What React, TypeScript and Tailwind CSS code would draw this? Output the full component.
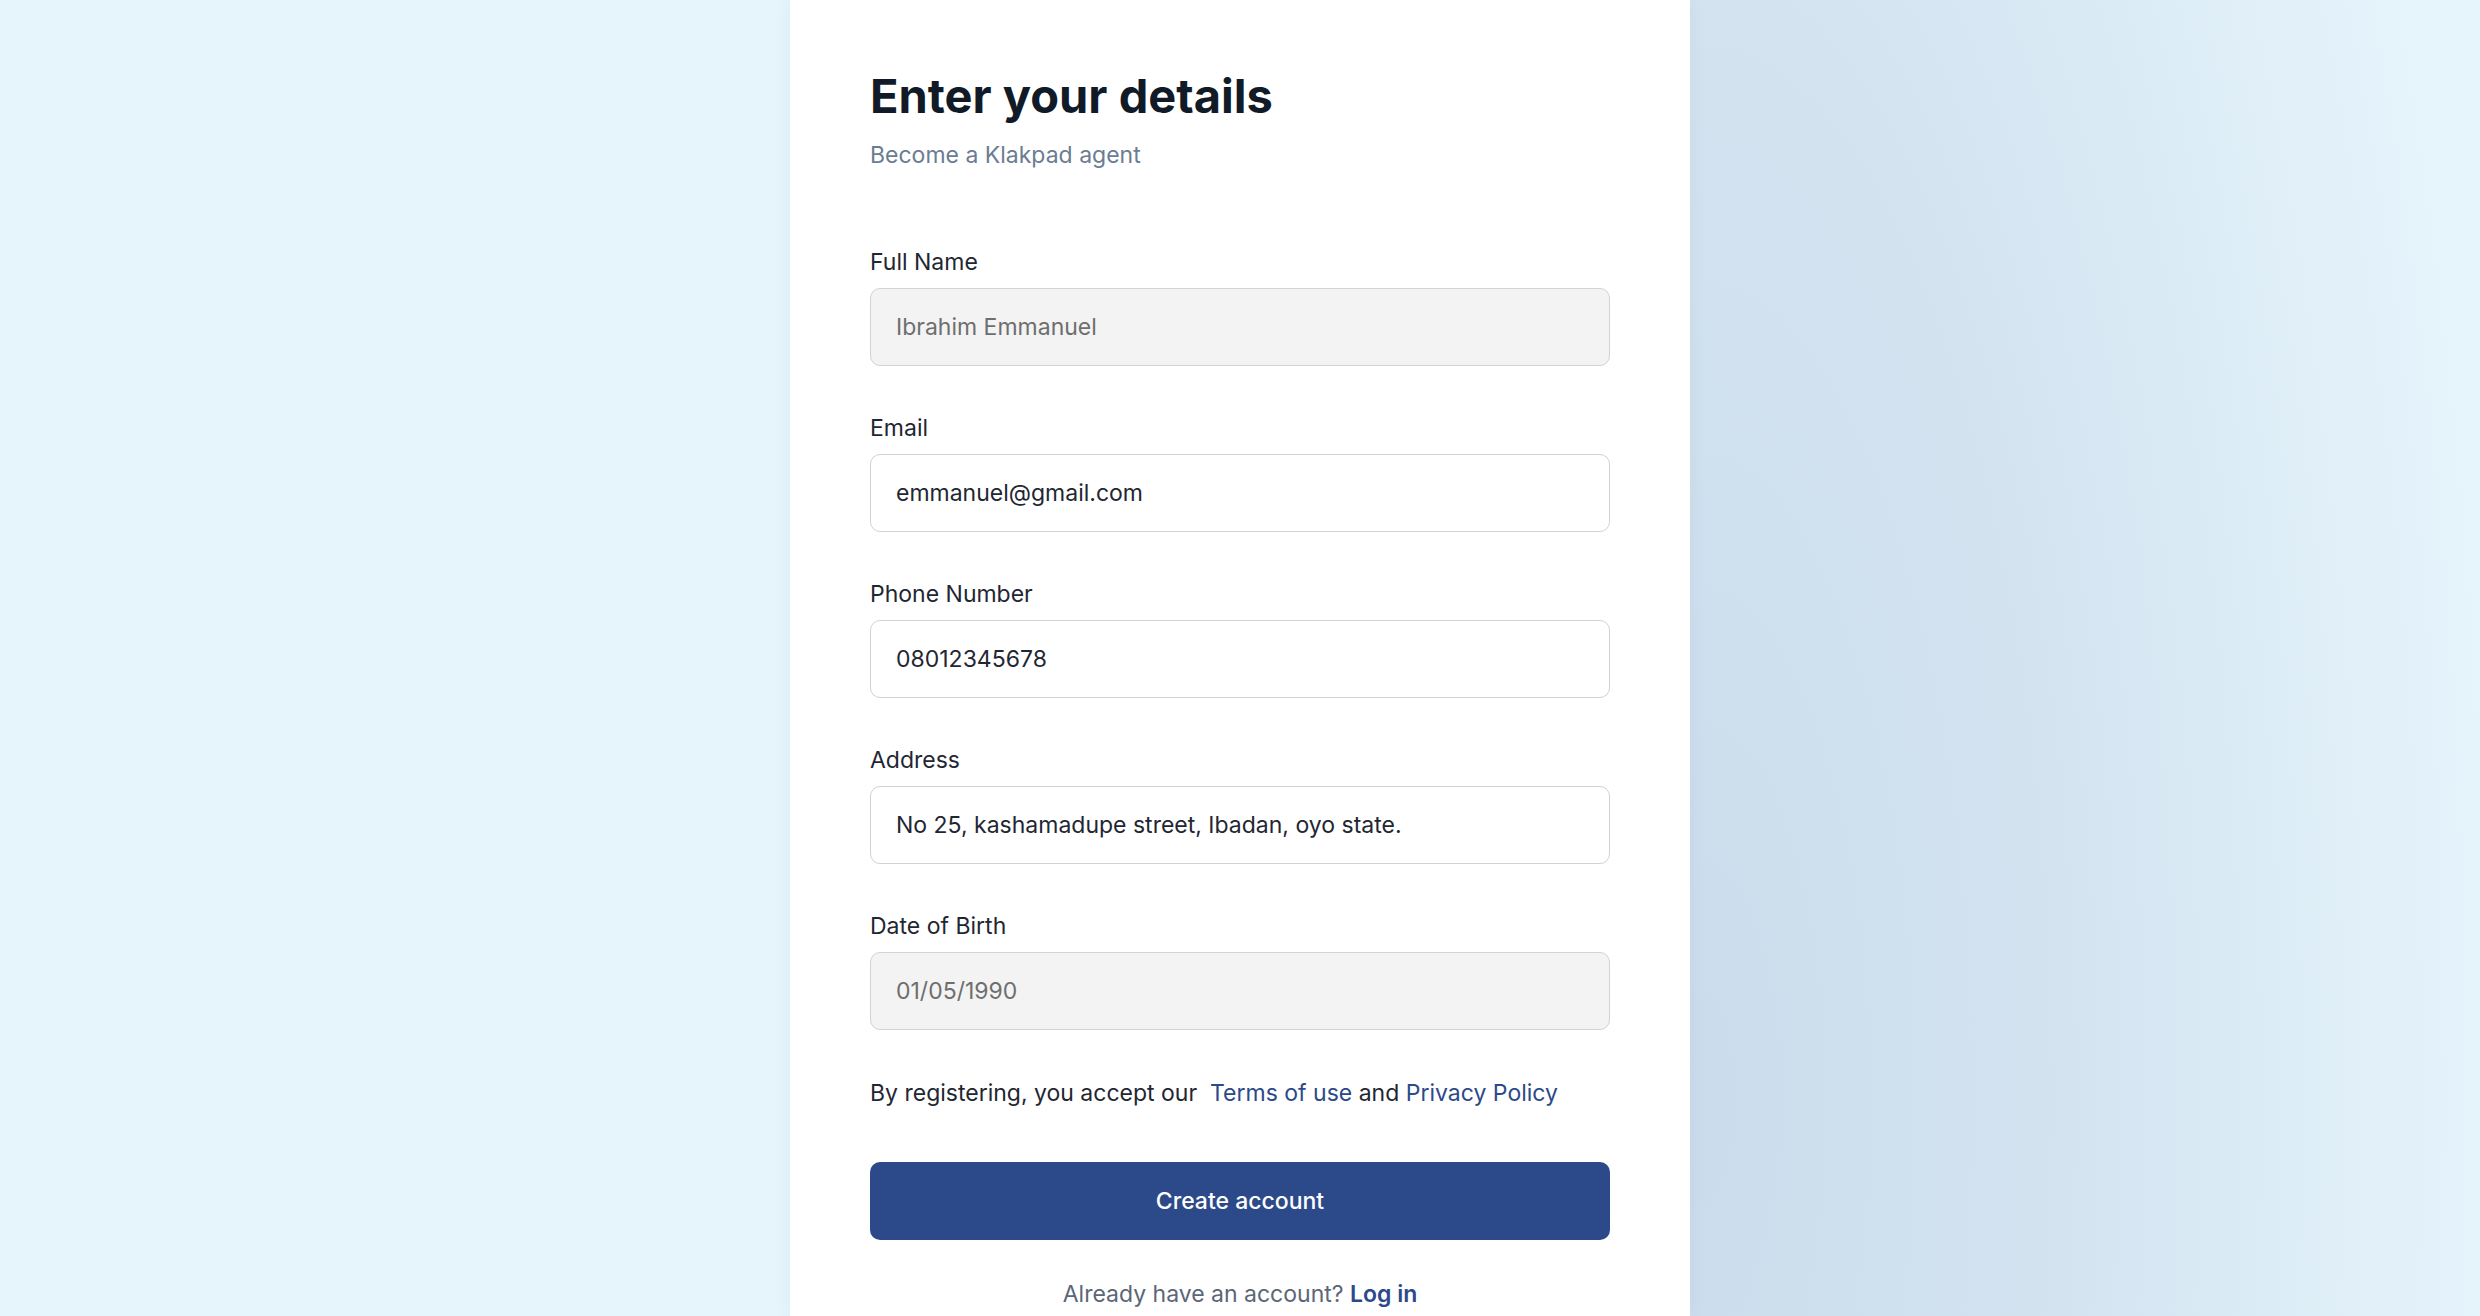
import React from "react";

type FieldProps = { label: string; value: string; disabled?: boolean };

function Field({ label, value, disabled }: FieldProps) {
  return (
    <div className="flex flex-col">
      <label className="text-[23px] leading-[32px] text-[#1f2733]">{label}</label>
      <input
        readOnly
        value={value}
        className={
          disabled
            ? "mt-[10px] h-[78px] w-full rounded-[10px] border border-[#d2d2d2] bg-[#f3f3f3] px-[25px] text-[23px] text-[#6e6e6e] outline-none"
            : "mt-[10px] h-[78px] w-full rounded-[10px] border border-[#d2d2d2] bg-white px-[25px] text-[23px] text-[#1f2733] outline-none"
        }
      />
    </div>
  );
}

export default function App() {
  return (
    <div className="flex h-screen w-full justify-center overflow-hidden bg-[#e6f5fc] bg-[radial-gradient(ellipse_800px_2400px_at_1700px_1100px,#cbdcec_0%,#d3e3f0_45%,#e6f5fc_100%)] font-[Inter,sans-serif]">
      <div className="flex h-full w-[900px] flex-col bg-white px-[80px] pt-[68px] shadow-[0_0_18px_rgba(40,80,120,0.06)]">
        <h1 className="text-[47px] font-bold leading-[56px] text-[#111a27]">
          Enter your details
        </h1>
        <p className="mt-[15px] text-[23px] leading-[32px] text-[#6b7c93]">Become a Klakpad agent</p>

        <div className="mt-[75px] flex flex-col gap-[46px]">
          <Field label="Full Name" value="Ibrahim Emmanuel" disabled />
          <Field label="Email" value="emmanuel@gmail.com" />
          <Field label="Phone Number" value="08012345678" />
          <Field label="Address" value="No 25, kashamadupe street, Ibadan, oyo state." />
          <Field label="Date of Birth" value="01/05/1990" disabled />
        </div>

        <p className="mt-[47px] text-[23px] leading-[32px] text-[#1f2733]">
          By registering, you accept our{"\u00a0 "}
          <span className="text-[#2c4a8a]">Terms of use</span> and{" "}
          <span className="text-[#2c4a8a]">Privacy Policy</span>
        </p>

        <button className="mt-[53px] flex h-[78px] w-full items-center justify-center rounded-[10px] bg-[#2c4a8a] text-[23px] font-medium text-white">
          Create account
        </button>

        <p className="mt-[38px] text-center text-[23px] leading-[32px] text-[#5b6677]">
          Already have an account? <span className="font-semibold text-[#2c4a8a]">Log in</span>
        </p>
      </div>
    </div>
  );
}
